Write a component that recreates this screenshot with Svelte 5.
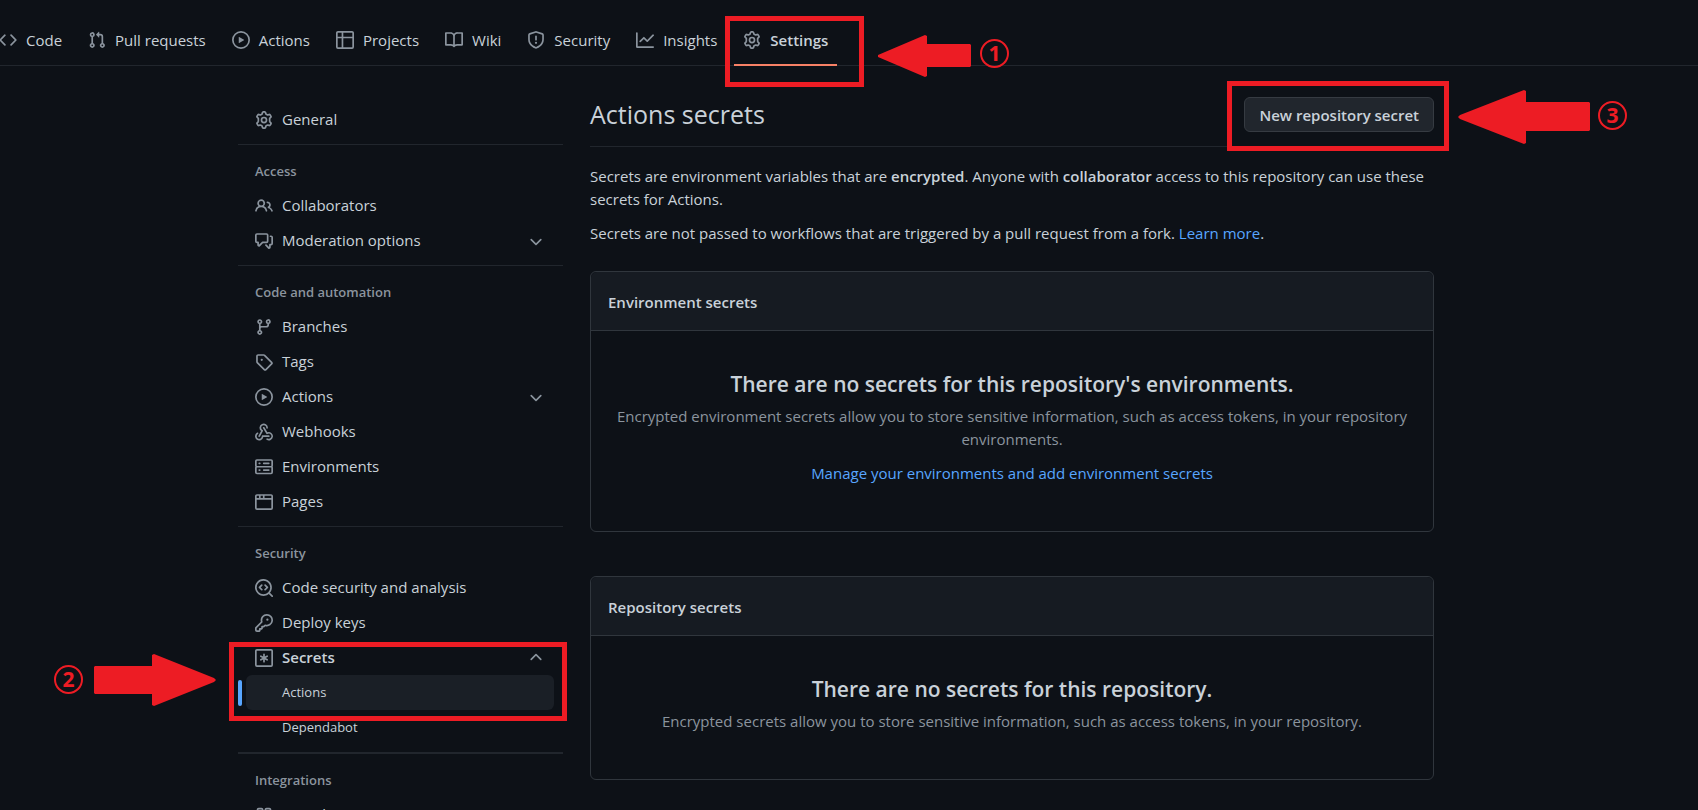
<script>
  const icons = {
    code: 'M4.72 3.22a.75.75 0 011.06 1.06L2.06 8l3.72 3.72a.75.75 0 11-1.06 1.06L.47 8.53a.75.75 0 010-1.06l4.25-4.25zm6.56 0a.75.75 0 10-1.06 1.06L13.94 8l-3.72 3.72a.75.75 0 101.06 1.06l4.25-4.25a.75.75 0 000-1.06l-4.25-4.25z',
    pull: 'M7.177 3.073L9.573.677A.25.25 0 0110 .854v4.792a.25.25 0 01-.427.177L7.177 3.427a.25.25 0 010-.354zM3.75 2.5a.75.75 0 100 1.5.75.75 0 000-1.5zm-2.25.75a2.25 2.25 0 113 2.122v5.256a2.251 2.251 0 11-1.5 0V5.372A2.25 2.25 0 011.5 3.25zM11 2.5h-1V4h1a1 1 0 011 1v5.628a2.251 2.251 0 101.5 0V5A2.5 2.5 0 0011 2.5zm1 10.25a.75.75 0 111.5 0 .75.75 0 01-1.5 0zM3.75 12a.75.75 0 100 1.5.75.75 0 000-1.5z',
    play: 'M1.5 8a6.5 6.5 0 1113 0 6.5 6.5 0 01-13 0zM8 0a8 8 0 100 16A8 8 0 008 0zM6.379 5.227A.25.25 0 006 5.442v5.117a.25.25 0 00.379.214l4.264-2.559a.25.25 0 000-.428L6.379 5.227z',
    table: 'M0 1.75C0 .784.784 0 1.75 0h12.5C15.216 0 16 .784 16 1.75v12.5A1.75 1.75 0 0114.25 16H1.75A1.75 1.75 0 010 14.25V1.75zM1.5 6.5v7.75c0 .138.112.25.25.25H5v-8H1.5zM5 5H1.5V1.75a.25.25 0 01.25-.25H5V5zm1.500 1.5v8h7.750a.25.25 0 00.25-.25V6.500h-8zm8-1.500h-8V1.500h7.750a.25.25 0 01.25.25V5z',
    book: 'M0 1.750A.75.75 0 01.750 1h4.253c1.227 0 2.317.590 3 1.501A3.744 3.744 0 0111.006 1h4.245a.75.75 0 01.750.750v10.500a.75.75 0 01-.750.750h-4.507a2.250 2.250 0 00-1.591.659l-.622.621a.75.75 0 01-1.060 0l-.622-.621A2.250 2.250 0 005.258 13H.750a.75.75 0 01-.750-.750V1.750zm8.755 3a2.250 2.250 0 012.250-2.250H14.500v9h-3.757c-.710 0-1.400.201-1.992.572l.004-7.322zm-1.504 7.324l.004-5.073-.002-2.253A2.250 2.250 0 005.003 2.500H1.500v9h3.757a3.750 3.750 0 011.994.574z',
    shield: 'M7.467.133a1.750 1.750 0 011.066 0l5.250 1.680A1.750 1.750 0 0115 3.480V7c0 1.566-.320 3.182-1.303 4.682-.983 1.498-2.585 2.813-5.032 3.855a1.700 1.700 0 01-1.330 0c-2.447-1.042-4.049-2.357-5.032-3.855C1.320 10.182 1 8.566 1 7V3.480a1.750 1.750 0 011.217-1.667l5.250-1.680zm.610 1.429a.25.25 0 00-.153 0l-5.250 1.680a.25.25 0 00-.174.238V7c0 1.358.275 2.666 1.057 3.860.784 1.194 2.121 2.340 4.366 3.297a.200.200 0 00.154 0c2.245-.956 3.582-2.104 4.366-3.298C13.225 9.666 13.500 8.360 13.500 7V3.480a.25.25 0 00-.174-.237l-5.250-1.680zM9 10.500a1 1 0 11-2 0 1 1 0 012 0zm-.250-5.750a.75.75 0 10-1.500 0v3a.75.75 0 001.500 0v-3z',
    graph: 'M1.500 1.750a.75.75 0 00-1.500 0v12.500c0 .414.336.750.750.750h14.500a.75.75 0 000-1.500H1.500V1.750zm14.280 2.530a.75.75 0 00-1.060-1.060L10 7.940 7.530 5.470a.75.75 0 00-1.060 0L3.220 8.720a.75.75 0 001.060 1.060L7 7.060l2.470 2.470a.75.75 0 001.060 0l5.250-5.250z',
    people: 'M5.500 3.500a2 2 0 100 4 2 2 0 000-4zM2 5.500a3.500 3.500 0 115.898 2.549 5.507 5.507 0 013.034 4.084.75.75 0 11-1.482.235 4.001 4.001 0 00-7.900 0 .75.75 0 01-1.482-.236A5.507 5.507 0 013.102 8.050 3.490 3.490 0 012 5.500zM11 4a.75.75 0 100 1.500 1.500 1.500 0 01.666 2.844.75.75 0 00-.416.672v.352a.75.75 0 00.574.730c1.200.289 2.162 1.200 2.522 2.372a.75.75 0 101.434-.440 5.010 5.010 0 00-2.560-3.012A3 3 0 0011 4z',
    discussion: 'M1.500 2.750a.25.25 0 01.250-.250h8.500a.25.25 0 01.250.250v5.500a.25.25 0 01-.250.250h-3.500a.75.75 0 00-.530.220L3.500 11.440V9.250a.75.75 0 00-.750-.750h-1a.25.25 0 01-.250-.250v-5.500zM1.750 1A1.750 1.750 0 000 2.750v5.500C0 9.216.784 10 1.750 10H2v1.543a1.457 1.457 0 002.487 1.030L7.061 10h3.189A1.750 1.750 0 0012 8.250v-5.500A1.750 1.750 0 0010.250 1h-8.500zM14.500 4.750a.25.25 0 00-.250-.250h-.500a.75.75 0 110-1.500h.500c.966 0 1.750.784 1.750 1.750v5.500A1.750 1.750 0 0114.250 12H14v1.543a1.457 1.457 0 01-2.487 1.030L9.220 12.280a.75.75 0 111.060-1.060l2.220 2.220v-2.190a.75.75 0 01.750-.750h1a.25.25 0 00.250-.250v-5.500z',
    branch: 'M11.750 2.500a.75.75 0 100 1.500.75.75 0 000-1.500zm-2.250.750a2.250 2.250 0 113 2.122V6A2.500 2.500 0 0110 8.500H6a1 1 0 00-1 1v1.128a2.251 2.251 0 11-1.500 0V5.372a2.250 2.250 0 111.500 0v1.836A2.492 2.492 0 016 7h4a1 1 0 001-1v-.628A2.250 2.250 0 019.500 3.250zM4.250 12a.75.75 0 100 1.500.75.75 0 000-1.500zM3.500 3.250a.75.75 0 111.500 0 .75.75 0 01-1.500 0z',
    tag: 'M2.500 7.775V2.750a.25.25 0 01.250-.250h5.025a.25.25 0 01.177.073l6.250 6.250a.25.25 0 010 .354l-5.025 5.025a.25.25 0 01-.354 0l-6.250-6.250a.25.25 0 01-.073-.177zm-1.500 0V2.750C1 1.784 1.784 1 2.750 1h5.025c.464 0 .910.184 1.238.513l6.250 6.250a1.750 1.750 0 010 2.474l-5.026 5.026a1.750 1.750 0 01-2.474 0l-6.250-6.250A1.750 1.750 0 011 7.775zM6 5a1 1 0 100 2 1 1 0 000-2z',
    webhook: 'M5.500 4.250a2.250 2.250 0 014.500 0 .75.75 0 001.500 0 3.750 3.750 0 10-6.140 2.889l-2.272 4.258a.75.75 0 001.324.706L7 7.250a.75.75 0 00-.309-1.015A2.250 2.250 0 015.500 4.250zM7.364 3.607a.75.75 0 011.030.257l2.608 4.349a3.750 3.750 0 11-.628 6.785.75.75 0 01.752-1.299 2.250 2.250 0 10-.033-3.880.75.75 0 01-1.030-.256L7.107 4.636a.75.75 0 01.257-1.030zM2.900 8.776A.75.75 0 012.625 9.800 2.250 2.250 0 106 11.750a.75.75 0 01.750-.751h5.500a.75.75 0 010 1.500H7.425a3.751 3.751 0 11-5.550-3.998.75.75 0 011.024.274z',
    server: 'M1.750 1A1.750 1.750 0 000 2.750v4c0 .372.116.717.314 1a1.742 1.742 0 00-.314 1v4c0 .966.784 1.750 1.750 1.750h12.500A1.750 1.750 0 0016 12.750v-4c0-.372-.116-.717-.314-1 .198-.283.314-.628.314-1v-4A1.750 1.750 0 0014.250 1H1.750zm0 7.500a.25.25 0 00-.250.250v4c0 .138.112.250.250.250h12.500a.25.25 0 00.250-.250v-4a.25.25 0 00-.250-.250H1.750zM1.500 2.750a.25.25 0 01.250-.250h12.500a.25.25 0 01.250.250v4a.25.25 0 01-.250.250H1.750a.25.25 0 01-.250-.250v-4zm5.500 2A.75.75 0 017.750 4h4.500a.75.75 0 010 1.500h-4.500A.75.75 0 017 4.750zM7.750 10a.75.75 0 000 1.500h4.500a.75.75 0 000-1.500h-4.500zM3 4.750A.75.75 0 013.750 4h.500a.75.75 0 010 1.500h-.500A.75.75 0 013 4.750zM3.750 10a.75.75 0 000 1.500h.500a.75.75 0 000-1.500h-.500z',
    browser: 'M0 2.750C0 1.784.784 1 1.750 1h12.500c.966 0 1.750.784 1.750 1.750v10.500A1.750 1.750 0 0114.250 15H1.750A1.750 1.750 0 010 13.250V2.750zm1.750-.250a.25.25 0 00-.250.250V4.500h2v-2H1.750zM5 2.500v2h2v-2H5zm3.500 0v2h6V2.750a.25.25 0 00-.250-.250H8.500zm6 3.500h-13v7.250c0 .138.112.250.250.250h12.500a.25.25 0 00.250-.250V6z',
    codescan: 'M8.470 4.970a.75.75 0 000 1.060L9.940 7.500 8.470 8.970a.75.75 0 101.060 1.060l2-2a.75.75 0 000-1.060l-2-2a.75.75 0 00-1.060 0zM6.530 6.030a.75.75 0 00-1.060-1.060l-2 2a.75.75 0 000 1.060l2 2a.75.75 0 101.060-1.060L5.060 7.500l1.470-1.470zM12.246 13.307a7.500 7.500 0 111.060-1.060l2.474 2.473a.75.75 0 11-1.060 1.060l-2.474-2.473zM1.500 7.500a6 6 0 1112 0 6 6 0 01-12 0z',
    key: 'M6.500 5.500a4 4 0 112.731 3.795.75.75 0 00-.768.180L7.440 10.500H6.250a.75.75 0 00-.750.750v1.190l-.060.060H4.250a.75.75 0 00-.750.750v1.190l-.060.060H1.750a.25.25 0 01-.250-.250v-1.690l5.024-5.023a.75.75 0 00.181-.768A3.995 3.995 0 016.500 5.500zm4-5.500a5.500 5.500 0 00-5.348 6.788L.220 11.720a.75.75 0 00-.220.530v2C0 15.216.784 16 1.750 16h2a.75.75 0 00.530-.220l.500-.500a.75.75 0 00.220-.530V14h.750a.75.75 0 00.530-.220l.500-.500a.75.75 0 00.220-.530V12h.750a.75.75 0 00.530-.220l.932-.932A5.500 5.500 0 1010.500 0zm.500 6a1 1 0 100-2 1 1 0 000 2z',
    asterisk: 'M0 1.750C0 .784.784 0 1.750 0h12.500C15.216 0 16 .784 16 1.750v12.500A1.750 1.750 0 0114.250 16H1.750A1.750 1.750 0 010 14.250V1.750zm1.750-.250a.25.25 0 00-.250.250v12.500c0 .138.112.250.250.250h12.500a.25.25 0 00.250-.250V1.750a.25.25 0 00-.250-.250H1.750zM8 4a.75.75 0 01.750.750V6.700l1.690-.975a.75.75 0 01.750 1.300L9.500 8l1.690.976a.75.75 0 01-.750 1.298L8.750 9.300v1.951a.75.75 0 01-1.500 0V9.299l-1.690.976a.75.75 0 01-.750-1.300L6.500 8l-1.690-.975a.75.75 0 01.750-1.300l1.690.976V4.750A.75.75 0 018 4z',
    apps: 'M1.500 3.250c0-.966.784-1.750 1.750-1.750h2.500c.966 0 1.750.784 1.750 1.750v2.500A1.750 1.750 0 015.750 7.500h-2.500A1.750 1.750 0 011.500 5.750v-2.500zM3.250 3a.25.25 0 00-.250.250v2.500c0 .138.112.250.250.250h2.500A.25.25 0 006 5.750v-2.500A.25.25 0 005.750 3h-2.500zM8.500 3.250c0-.966.784-1.750 1.750-1.750h2.500c.966 0 1.750.784 1.750 1.750v2.500a1.750 1.750 0 01-1.750 1.750h-2.500A1.750 1.750 0 018.500 5.750v-2.500zM10.250 3a.25.25 0 00-.250.250v2.500c0 .138.112.250.250.250h2.500a.25.25 0 00.250-.250v-2.500a.25.25 0 00-.250-.250h-2.500z',
    down: 'M12.780 6.220a.75.75 0 010 1.060l-4.250 4.250a.75.75 0 01-1.060 0L3.220 7.280a.75.75 0 011.060-1.060L8 9.940l3.720-3.720a.75.75 0 011.060 0z',
    up: 'M3.220 9.780a.75.75 0 010-1.060l4.250-4.250a.75.75 0 011.060 0l4.250 4.250a.75.75 0 01-1.060 1.060L8 6.060 4.280 9.780a.75.75 0 01-1.060 0z'
  };

  const tabs = [
    ['Code', 'code'], ['Pull requests', 'pull'], ['Actions', 'play'], ['Projects', 'table'],
    ['Wiki', 'book'], ['Security', 'shield'], ['Insights', 'graph'], ['Settings', 'gear']
  ];

  const groups = [
    { items: [{ label: 'General', icon: 'gear' }] },
    { title: 'Access', items: [
      { label: 'Collaborators', icon: 'people' },
      { label: 'Moderation options', icon: 'discussion', toggle: 'down' }
    ] },
    { title: 'Code and automation', items: [
      { label: 'Branches', icon: 'branch' },
      { label: 'Tags', icon: 'tag' },
      { label: 'Actions', icon: 'play', toggle: 'down' },
      { label: 'Webhooks', icon: 'webhook' },
      { label: 'Environments', icon: 'server' },
      { label: 'Pages', icon: 'browser' }
    ] },
    { title: 'Security', items: [
      { label: 'Code security and analysis', icon: 'codescan' },
      { label: 'Deploy keys', icon: 'key' },
      { label: 'Secrets', icon: 'asterisk', toggle: 'up', children: ['Actions', 'Dependabot'] }
    ] },
    { title: 'Integrations', thick: true, items: [{ label: 'GitHub apps', icon: 'apps' }] }
  ];
</script>

{#snippet icon(name)}
  <svg class="icon" viewBox="0 0 16 16" aria-hidden="true">
    {#if name === 'gear'}
      <g fill="none" stroke="currentColor" stroke-width="1.500" stroke-linejoin="round">
        <path d="M7.100.85Q8 .7 8.900.85Q9.250.95 9.350 1.300L9.650 2.500Q9.800 2.850 10.150 3Q10.500 3.200 10.850 3.400Q11.150 3.550 11.500 3.450L12.700 3.100Q13.100 3 13.350 3.300Q13.900 4 14.250 4.850Q14.400 5.200 14.100 5.500L13.250 6.350Q12.950 6.650 13 7Q13.050 8 13 9Q12.950 9.350 13.250 9.650L14.100 10.500Q14.400 10.800 14.250 11.150Q13.900 12 13.350 12.700Q13.100 13 12.700 12.900L11.500 12.550Q11.150 12.450 10.850 12.600Q10.500 12.800 10.150 13Q9.800 13.150 9.650 13.500L9.350 14.700Q9.250 15.050 8.900 15.150Q8 15.300 7.100 15.150Q6.750 15.050 6.650 14.700L6.350 13.500Q6.200 13.150 5.850 13Q5.500 12.800 5.150 12.600Q4.850 12.450 4.500 12.550L3.300 12.900Q2.900 13 2.650 12.700Q2.100 12 1.750 11.150Q1.600 10.800 1.900 10.500L2.750 9.650Q3.050 9.350 3 9Q2.950 8 3 7Q3.050 6.650 2.750 6.350L1.900 5.500Q1.600 5.200 1.750 4.850Q2.100 4 2.650 3.300Q2.900 3 3.300 3.100L4.500 3.450Q4.850 3.550 5.150 3.400Q5.500 3.200 5.850 3Q6.200 2.850 6.350 2.500L6.650 1.300Q6.750.95 7.100.85Z" />
        <circle cx="8" cy="8" r="2.250" />
      </g>
    {:else}
      <path fill="currentColor" fill-rule="evenodd" d={icons[name]} />
    {/if}
  </svg>
{/snippet}

<div class="page">
  <nav class="tabs" aria-label="Repository">
    {#each tabs as [label, glyph]}
      <a href="#{glyph}" class="tab" class:selected={label === 'Settings'}>{@render icon(glyph)}<span>{label}</span></a>
    {/each}
  </nav>

  <div class="outer">
    <div class="layout">
      <nav class="side" aria-label="Settings">
        {#each groups as group}
          <section class:divided={group.title} class:thick={group.thick}>
            {#if group.title}<h3>{group.title}</h3>{/if}
            <ul>
              {#each group.items as item}
                <li>
                  {#if item.toggle}
                    <button class="row" class:open={item.children} aria-expanded={!!item.children}>
                      {@render icon(item.icon)}<span class="label">{item.label}</span>{@render icon(item.toggle)}
                    </button>
                  {:else}
                    <a class="row" href="#{item.icon}">{@render icon(item.icon)}<span class="label">{item.label}</span></a>
                  {/if}
                  {#if item.children}
                    <ul>
                      {#each item.children as child, i}
                        <li><a class="row sub" class:current={i === 0} href="#{child}">{child}</a></li>
                      {/each}
                    </ul>
                  {/if}
                </li>
              {/each}
            </ul>
          </section>
        {/each}
      </nav>

      <main>
        <header class="subhead">
          <h1>Actions secrets</h1>
          <button class="new">New repository secret</button>
        </header>
        <p>Secrets are environment variables that are <strong>encrypted</strong>. Anyone with <strong>collaborator</strong> access to this repository can use these secrets for Actions.</p>
        <p>Secrets are not passed to workflows that are triggered by a pull request from a fork. <a href="#learn">Learn more</a>.</p>

        <section class="card">
          <h2>Environment secrets</h2>
          <div class="blank">
            <h3>There are no secrets for this repository's environments.</h3>
            <p class="muted">Encrypted environment secrets allow you to store sensitive information, such as access tokens, in your repository environments.</p>
            <p><a href="#environments">Manage your environments and add environment secrets</a></p>
          </div>
        </section>

        <section class="card">
          <h2>Repository secrets</h2>
          <div class="blank">
            <h3>There are no secrets for this repository.</h3>
            <p class="muted">Encrypted secrets allow you to store sensitive information, such as access tokens, in your repository.</p>
          </div>
        </section>
      </main>
    </div>
  </div>

  <!-- Numbered callouts drawn over the page -->
  <div class="frame frame-1"></div>
  <svg class="arrow arrow-1" viewBox="0 0 94 42"><path d="M1 20 48 0 50 1V9H93L94 10V31L93 32H50V41L48 42 1 22Z" /></svg>
  <span class="step step-1">1</span>

  <div class="frame frame-2"></div>
  <svg class="arrow arrow-2" viewBox="0 0 122 52"><path d="M120 24 60 0 58 1V12H1L0 13V39L1 40H58V51L60 52 120 28 122 26Z" /></svg>
  <span class="step step-2">2</span>

  <div class="frame frame-3"></div>
  <svg class="arrow arrow-3" viewBox="0 0 132 54"><path d="M2 25 66 0 68 1V12H131L132 13V40L131 41H68V53L66 54 2 29 0 27Z" /></svg>
  <span class="step step-3">3</span>
</div>

<style>
  :global(body) { margin: 0; background: #0d1117; }
  .page {
    position: relative;
    height: 100vh;
    overflow: hidden;
    background: #0d1117;
    color: #c9d1d9;
    font: 15px/23px "Open Sans", "Noto Sans", sans-serif;
  }
  .page * { box-sizing: border-box; }
  h1, h2, h3, p, ul { margin: 0; padding: 0; }
  ul { list-style: none; }
  a { color: #58a6ff; text-decoration: none; }
  button { font: inherit; color: inherit; cursor: pointer; }
  strong { font-weight: 600; }
  .icon { width: 18px; height: 18px; flex: none; color: #8b949e; }

  .tabs {
    display: flex;
    gap: 8px;
    height: 66px;
    padding-top: 16px;
    margin-left: -10px;
    border-bottom: 1px solid #21262d;
  }
  .tab {
    display: flex;
    align-items: center;
    gap: 9px;
    height: 50px;
    padding: 0 9px;
    border-bottom: 2px solid transparent;
    color: #c9d1d9;
    white-space: nowrap;
  }
  .tab.selected { font-weight: 600; border-color: #f78166; }

  .outer { padding-right: 26px; }
  .layout {
    display: grid;
    grid-template-columns: 325px minmax(0, 1fr);
    gap: 27px;
    max-width: 1196px;
    margin: 0 auto;
  }

  .side { padding-top: 36px; }
  .divided { margin-top: 7px; border-top: 1px solid #21262d; padding-top: 9px; }
  .thick { border-top-width: 2px; }
  .side h3 {
    padding-left: 17px;
    font-size: 13px;
    line-height: 34px;
    font-weight: 600;
    color: #8b949e;
  }
  .row {
    position: relative;
    display: flex;
    align-items: center;
    gap: 9px;
    width: calc(100% - 17px);
    height: 35px;
    margin: 0 9px 0 8px;
    padding: 0 9px;
    border: 0;
    border-radius: 6px;
    background: none;
    color: #c9d1d9;
    text-align: left;
  }
  .label { flex: 1; }
  .open { font-weight: 600; }
  .sub { padding-left: 36px; font-size: 13px; }
  .current { background: #1a1f26; }
  .current::before {
    content: "";
    position: absolute;
    left: -8px;
    top: 5px;
    width: 4px;
    height: 26px;
    border-radius: 6px;
    background: #58a6ff;
  }

  main { padding-top: 31px; }
  .subhead {
    display: flex;
    align-items: flex-start;
    justify-content: space-between;
    height: 50px;
    margin-bottom: 18px;
    border-bottom: 1px solid #21262d;
  }
  h1 { font-size: 25px; line-height: 35px; font-weight: 400; }
  .new {
    height: 35px;
    padding: 1px 14px 0;
    border: 1px solid #363b42;
    border-radius: 6px;
    background: #21262d;
    font-weight: 600;
    white-space: nowrap;
  }
  main p { margin-bottom: 11px; }

  .card { margin-top: 26px; border: 1px solid #30363d; border-radius: 6px; }
  .card + .card { margin-top: 44px; }
  .card h2 {
    padding: 19px 17px 16px;
    border-bottom: 1px solid #30363d;
    border-radius: 6px 6px 0 0;
    background: #161b22;
    font-size: 15px;
    line-height: 23px;
    font-weight: 600;
  }
  .blank { padding: 37px 24px 35px; text-align: center; }
  .blank h3 { margin-bottom: 4px; font-size: 21px; line-height: 33px; font-weight: 600; }
  .muted { color: #8b949e; }

  .frame, .arrow, .step { position: absolute; pointer-events: none; }
  .frame { border: 5px solid #ed1c24; }
  .frame-1 { left: 725px; top: 16px; width: 139px; height: 71px; }
  .frame-2 { left: 229px; top: 642px; width: 338px; height: 79px; }
  .frame-3 { left: 1227px; top: 81px; width: 222px; height: 70px; }
  .arrow { fill: #ed1c24; }
  .arrow-1 { left: 877px; top: 35px; width: 94px; height: 42px; }
  .arrow-2 { left: 94px; top: 654px; width: 122px; height: 52px; }
  .arrow-3 { left: 1458px; top: 90px; width: 132px; height: 54px; }
  .step {
    width: 29px;
    height: 29px;
    border: 2px solid #ed1c24;
    border-radius: 50%;
    color: #ed1c24;
    font: 700 21px/25px "Noto Sans", sans-serif;
    text-align: center;
  }
  .step-1 { left: 980px; top: 39px; }
  .step-2 { left: 54px; top: 665px; }
  .step-3 { left: 1598px; top: 101px; }
</style>
